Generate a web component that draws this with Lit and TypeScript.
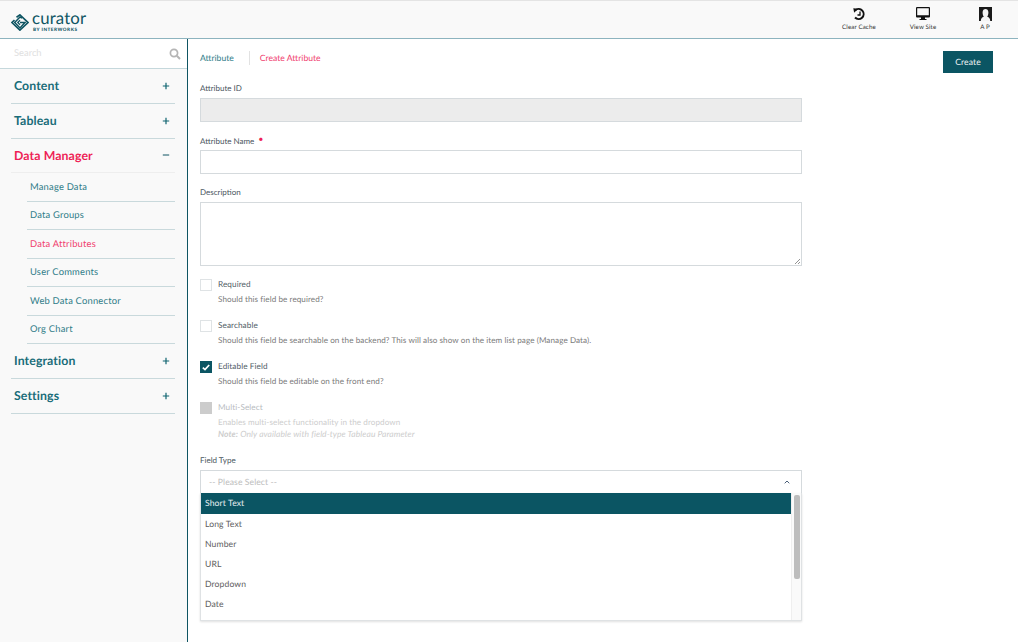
import { LitElement, html, css, nothing } from "lit";
import { customElement } from "lit/decorators.js";

const plus = html`<svg class="pm" width="8" height="8" viewBox="0 0 8 8"><path d="M4 .8v6.400M.8 4h6.400" stroke="#0f6470" stroke-width="1.200" fill="none"/></svg>`;
const minus = html`<svg class="pm" width="8" height="8" viewBox="0 0 8 8"><path d="M.8 4h6.400" stroke="#0f5563" stroke-width="1" fill="none"/></svg>`;

@customElement("app-root")
export class AppRoot extends LitElement {
  static styles = css`
    :host { display: flex; flex-direction: column; width: 1018px; height: 642px; overflow: hidden; background: #fff; font-family: "Lato", "Liberation Sans", sans-serif; color: #33434e; text-rendering: geometricPrecision; }
    * { box-sizing: border-box; }
    header { height: 39px; flex: none; background: #f9f9f9; border-top: 1px solid #e4e4e4; border-bottom: 1px solid #8db4bf; display: flex; align-items: flex-start; }
    .logo { margin: 9px 0 0 11px; display: flex; align-items: center; gap: 3px; width: 100px; }
    .logo svg { margin-top: 3px; }
    .logotext { display: flex; flex-direction: column; color: #0f5563; }
    .curator { font-size: 16.8px; line-height: 15px; font-weight: 400; letter-spacing: .15px; }
    .by { font-size: 4.6px; line-height: 6px; font-weight: 900; letter-spacing: .55px; margin: 1px 0 0 1px; }
    .tools { margin-left: auto; display: flex; padding-top: 6px; }
    .tool { width: 64px; display: flex; flex-direction: column; align-items: center; font-size: 6.2px; line-height: 8px; color: #333; letter-spacing: .12px; }
    .tool svg { display: block; height: 14px; margin-bottom: 3px; }
    .tool.last { margin-right: 3px; width: 60px; }
    .body { flex: 1; display: flex; min-height: 0; }
    aside { width: 188px; flex: none; background: #f9f9f9; border-right: 1.5px solid #0f5563; }
    .search { height: 30px; background: #fff; border-bottom: 1px solid #c5d8dc; display: flex; align-items: center; justify-content: space-between; padding: 0 6px 0 14px; font-size: 9.4px; color: #e0e0e0; }
    .sec { margin: 0 12px 0 11px; height: 35px; border-bottom: 1px solid #c9d9dc; display: flex; align-items: center; justify-content: space-between; padding: 0 5px 1px 3px; font-size: 12.3px; font-weight: 700; color: #1a6d79; letter-spacing: .1px; }
    .sec.active { color: #ee1f56; border-bottom-color: #eeeeee; height: 34px; }
    .sub { margin: 0 12px 0 27px; height: 28.5px; border-bottom: 1px solid #c9d9dc; display: flex; align-items: center; padding: 1px 0 0 3px; font-size: 9.4px; color: #2f7c88; letter-spacing: .2px; }
    .sub.active { color: #f0406e; }
    main { flex: 1; padding: 12px 25px 0 12px; min-width: 0; }
    .top { display: flex; align-items: flex-start; height: 32px; }
    .crumb { display: flex; align-items: center; font-size: 8.6px; height: 14px; }
    .crumb .a { color: #2f7c88; padding-right: 15px; border-right: 1px solid #e2e2e2; line-height: 14px; }
    .crumb .b { color: #f0406e; padding-left: 10px; }
    .btn { margin-left: auto; width: 50px; height: 22px; background: #0b5563; color: #eef3f4; display: flex; align-items: center; justify-content: center; font-size: 8.6px; letter-spacing: .1px; padding-bottom: 1px; }
    .form { width: 602px; }
    label.f { display: block; font-size: 8px; line-height: 10px; color: #4a555e; }
    .req { color: #ee1f56; font-size: 9px; margin-left: 2px; position: relative; top: -2px; }
    .input { height: 24px; border: 1px solid #d5dadd; background: #fff; margin-top: 5px; }
    .input.dis { background: #ececec; margin-bottom: 14px; }
    .input.name { margin-top: 4px; margin-bottom: 13px; }
    .ta { height: 64px; border: 1px solid #d5dadd; margin-top: 5px; margin-bottom: 13px; position: relative; }
    .grip { position: absolute; right: 0; bottom: 0; }
    .chk { display: grid; grid-template-columns: 12px 1fr; column-gap: 6px; font-size: 8.2px; letter-spacing: .08px; margin-bottom: 16px; }
    .box { width: 12px; height: 12px; border: 1px solid #dfe3e5; background: #fff; display: flex; align-items: center; justify-content: center; }
    .box.on { background: #0b5563; border-color: #0b5563; }
    .box.off { background: #cccccc; border-color: #cccccc; }
    .cl { line-height: 11px; color: #525e67; }
    .cd { grid-column: 2; line-height: 10px; margin-top: 3px; color: #7a7a7a; font-size: 8.1px; }
    .chk.dim .cl { color: #b8bcbf; }
    .chk.dim .cd { color: #cdcdcd; }
    .note { display: block; font-style: italic; margin-top: 2px; font-size: 8.5px; }
    .note b { font-weight: 700; }
    .select { height: 23px; margin-top: 5px; border: 1px solid #d5dadd; border-bottom: none; padding: 0 11px 1px 8px; display: flex; align-items: center; justify-content: space-between; font-size: 8.6px; color: #bdbdbd; letter-spacing: .08px; }
    .panel { height: 128px; border: 1px solid #dfe2e4; border-top: none; box-shadow: 0 1px 2px rgba(0,0,0,.12); display: flex; overflow: hidden; }
    .list { flex: 1; font-size: 8.6px; color: #606060; letter-spacing: .1px; }
    .opt { height: 20.2px; padding: 0 4px 1px; display: flex; align-items: center; }
    .opt.sel { background: #0b5563; color: #e8f0f2; height: 21px; }
    .track { width: 10px; background: #fafafa; border-left: 1px solid #efefef; padding: 2px 0 0 2px; }
    .thumb { width: 6px; height: 84px; background: #bdbdbd; border-radius: 2px; }
  `;

  render() {
    const subs = ["Manage Data", "Data Groups", "Data Attributes", "User Comments", "Web Data Connector", "Org Chart"];
    return html`
      <header>
        <div class="logo">
          <svg width="18" height="17" viewBox="0 0 18 17" fill="none" stroke="#0f5563">
            <path d="M5.500 3.200 8.900 .9 17 8.500 8.900 16.100.9 8.500l2.600-2.400" stroke-width="1.700"/>
            <path d="M11 4.200 9 3 3.700 8.500 9 14l5-5.500H9" stroke-width="1.500"/>
            <path d="M9 6.300 6.800 8.500 9 10.700" stroke-width="1.300"/>
          </svg>
          <div class="logotext"><span class="curator">curator</span><span class="by">BY INTERWORKS</span></div>
        </div>
        <div class="tools">
          <div class="tool">
            <svg width="14" height="14" viewBox="0 0 14 14" fill="none" stroke="#111"><path d="M3.300 3.300A5 5 0 1 1 3 10.500" stroke-width="2"/><path d="M1.300 1.200 6 1.800 2.200 5.800Z" fill="#111" stroke="none"/><path d="M8 4.500V8H5.500" stroke-width="1.300"/></svg>
            <span>Clear Cache</span>
          </div>
          <div class="tool">
            <svg width="14" height="14" viewBox="0 0 14 14"><path fill-rule="evenodd" d="M1 0h12a1 1 0 0 1 1 1v8.500a1 1 0 0 1-1 1H9V12h1.500v1h-7v-1H5v-1.500H1a1 1 0 0 1-1-1V1a1 1 0 0 1 1-1Zm.2 1.300v6.900h11.600V1.300Z" fill="#111"/></svg>
            <span>View Site</span>
          </div>
          <div class="tool last">
            <svg width="13" height="14" viewBox="0 0 13 14"><rect width="13" height="14" fill="#1a1a1a"/><path d="M1.800 14c0-2.600 1-3.600 3-4.300C3.900 8.600 3.600 6.800 3.600 5.300 3.600 3.200 4.900 2 6.500 2S9.400 3.200 9.400 5.300c0 1.500-.3 3.300-1.200 4.400 2 .7 3 1.700 3 4.300Z" fill="#f4f4f4"/></svg>
            <span>A P</span>
          </div>
        </div>
      </header>
      <div class="body">
        <aside>
          <div class="search">
            <span>Search</span>
            <svg width="12" height="12" viewBox="0 0 12 12" fill="none" stroke="#b5b5b5"><circle cx="5" cy="5" r="3.600" stroke-width="1.700"/><path d="M7.800 7.800 11 11" stroke-width="2"/></svg>
          </div>
          <div class="sec">Content ${plus}</div>
          <div class="sec">Tableau ${plus}</div>
          <div class="sec active">Data Manager ${minus}</div>
          ${subs.map((s) => html`<div class="sub ${s === "Data Attributes" ? "active" : ""}">${s}</div>`)}
          <div class="sec">Integration ${plus}</div>
          <div class="sec">Settings ${plus}</div>
        </aside>
        <main>
          <div class="top">
            <div class="crumb"><span class="a">Attribute</span><span class="b">Create Attribute</span></div>
            <div class="btn">Create</div>
          </div>
          <div class="form">
            <label class="f">Attribute ID</label>
            <div class="input dis"></div>
            <label class="f">Attribute Name <span class="req">•</span></label>
            <div class="input name"></div>
            <label class="f">Description</label>
            <div class="ta">
              <svg class="grip" width="7" height="7" viewBox="0 0 7 7" stroke="#777" fill="none"><path d="M1 6 6 1M4 6l2-2" stroke-width=".8"/></svg>
            </div>
            ${this.check("Required", "Should this field be required?")}
            ${this.check("Searchable", "Should this field be searchable on the backend? This will also show on the item list page (Manage Data).")}
            ${this.check("Editable Field", "Should this field be editable on the front end?", "on")}
            ${this.check("Multi-Select", "Enables multi-select functionality in the dropdown", "off", true)}
            <label class="f">Field Type</label>
            <div class="select">
              <span>-- Please Select --</span>
              <svg width="6" height="4" viewBox="0 0 6 4" fill="none" stroke="#4a5f78"><path d="M.7 3.300 3 1l2.300 2.300" stroke-width="1"/></svg>
            </div>
            <div class="panel">
              <div class="list">
                <div class="opt sel">Short Text</div>
                ${["Long Text", "Number", "URL", "Dropdown", "Date"].map((o) => html`<div class="opt">${o}</div>`)}
              </div>
              <div class="track"><div class="thumb"></div></div>
            </div>
          </div>
        </main>
      </div>
    `;
  }

  check(label: string, desc: string, state = "", note = false) {
    return html`<div class="chk ${note ? "dim" : ""}">
      <div class="box ${state}">
        ${state === "on" ? html`<svg width="8" height="7" viewBox="0 0 8 7" fill="none" stroke="#fff"><path d="M.8 3.600 3 5.600 7.200 1" stroke-width="1.700"/></svg>` : nothing}
      </div>
      <div class="cl">${label}</div>
      <div class="cd">${desc}${note ? html`<span class="note"><b>Note:</b> Only available with field-type Tableau Parameter</span>` : nothing}</div>
    </div>`;
  }
}
